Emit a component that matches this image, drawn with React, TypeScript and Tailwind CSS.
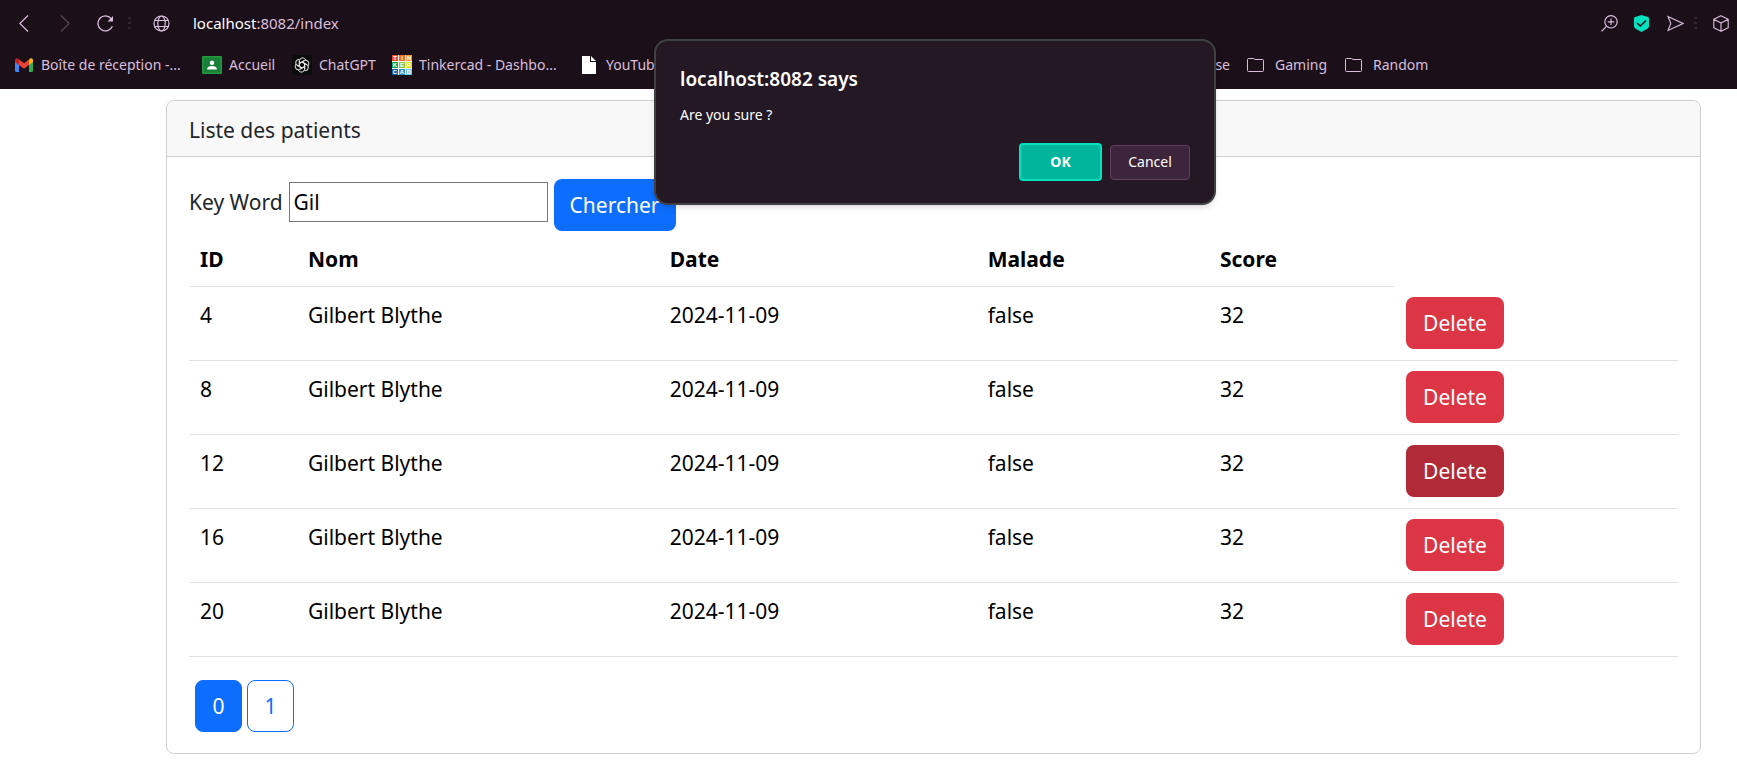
import type { ReactNode } from "react";

const patients = [
  { id: 4, active: false },
  { id: 8, active: false },
  { id: 12, active: true },
  { id: 16, active: false },
  { id: 20, active: false },
].map((p) => ({ ...p, nom: "Gilbert Blythe", date: "2024-11-09", malade: "false", score: 32 }));

const tinkercad = [
  ["T", "#f04e23"], ["I", "#f26a2a"], ["N", "#f7953a"],
  ["K", "#00a651"], ["E", "#8cc63f"], ["R", "#d7df23"],
  ["C", "#0b5fa5"], ["A", "#2f8fd0"], ["D", "#6cc5ea"],
];

function Bookmark({ icon, children }: { icon: ReactNode; children: ReactNode }) {
  return (
    <a href="#" className="flex items-center gap-[7px] whitespace-nowrap">
      {icon}
      <span>{children}</span>
    </a>
  );
}

function Folder() {
  return (
    <svg width="17" height="14" viewBox="0 0 17 14" fill="none" stroke="currentColor" className="mr-1">
      <path d="M.5 1.5a1 1 0 0 1 1-1h5l1.500 1H15.500a1 1 0 0 1 1 1v10a1 1 0 0 1-1 1h-14a1 1 0 0 1-1-1z" />
    </svg>
  );
}

function Dots({ className }: { className: string }) {
  return (
    <svg width="3" height="12" viewBox="0 0 3 12" fill="#322632" className={className}>
      <rect width="3" height="2" />
      <rect y="5" width="3" height="2" />
      <rect y="10" width="3" height="2" />
    </svg>
  );
}

function BrowserBar() {
  return (
    <header className="h-[89px] overflow-hidden bg-[#1b1019] text-[#d9bfdc]">
      <div className="flex h-[46px] items-center pr-2 pl-[19px]">
        <button aria-label="Back">
          <svg width="10" height="17" viewBox="0 0 10 17" fill="none" stroke="currentColor" strokeWidth="1.2">
            <path d="M9 .5.8 8.5 9 16.5" />
          </svg>
        </button>
        <button aria-label="Forward" className="ml-[31px] text-[#58465a]">
          <svg width="10" height="17" viewBox="0 0 10 17" fill="none" stroke="currentColor" strokeWidth="1.2">
            <path d="M1 .5 9.2 8.5 1 16.5" />
          </svg>
        </button>
        <button aria-label="Reload" className="ml-[27px]">
          <svg width="17" height="17" viewBox="0 0 17 17" fill="none" stroke="currentColor" strokeWidth="1.3">
            <path d="M15.400 11.200A7.500 7.500 0 1 1 14.200 3.600" />
            <path d="M16 1v5.500h-5.500z" fill="currentColor" stroke="none" />
          </svg>
        </button>
        <Dots className="ml-3.5" />
        <button aria-label="Site information" className="ml-[22px]">
          <svg width="17" height="17" viewBox="0 0 17 17" fill="none" stroke="currentColor" strokeWidth="1.2">
            <circle cx="8.5" cy="8.5" r="7.5" />
            <ellipse cx="8.5" cy="8.5" rx="3.7" ry="7.5" />
            <path d="M1.800 5.500h13.400M1.800 11.500h13.400" />
          </svg>
        </button>
        <p className="ml-[23px] text-[15px] leading-5">
          <span className="text-white">localhost</span>:8082/index
        </p>
        <div className="ml-auto flex items-center">
          <button aria-label="Zoom">
            <svg width="17" height="17" viewBox="0 0 17 17" fill="none" stroke="currentColor" strokeWidth="1.2">
              <circle cx="10" cy="6.8" r="6.2" />
              <path d="M5.600 11.200.6 16.400M10 3.500v6.600M6.700 6.800h6.600" />
            </svg>
          </button>
          <button aria-label="Protection" className="ml-4">
            <svg width="15" height="17" viewBox="0 0 15 17">
              <path d="M7.500 0 14 2q1 .4 1 1.500v7.500q0 1.500-1.200 2.400L7.500 17 1.200 13.400Q0 12.500 0 11V3.500Q0 2.400 1 2z" fill="#00e1c0" />
              <path d="m3 8 3.300 3L12 5.500" fill="none" stroke="#1b1019" strokeWidth="1.6" />
            </svg>
          </button>
          <button aria-label="Send" className="ml-[18px]">
            <svg width="17" height="17" viewBox="0 0 17 17" fill="none" stroke="currentColor" strokeWidth="1.1">
              <path d="M1 1.500 16 8.500 1 15.500 3.800 8.500z" />
            </svg>
          </button>
          <Dots className="ml-2.5" />
          <button aria-label="Extensions" className="ml-4">
            <svg width="16" height="17" viewBox="0 0 16 17" fill="none" stroke="currentColor" strokeWidth="1.1" strokeLinejoin="round">
              <path d="M8 .8 15.200 4.300V12.700L8 16.200.8 12.700V4.300zM.8 4.300 8 8l7.200-3.700M8 8v8.200" />
            </svg>
          </button>
        </div>
      </div>
      <nav aria-label="Bookmarks" className="flex h-[38px] items-center pl-[15px] text-sm leading-5">
        <div className="flex w-[187px]">
          <Bookmark
            icon={
              <svg width="19" height="14" viewBox="0 0 19 14">
                <path d="M0 2v10.500Q0 14 1.300 14H4V4z" fill="#4285f4" />
                <path d="M14 4v10h2.700Q18 14 18 12.500V2z" fill="#34a853" />
                <path d="M14 1.500V7l4-3V2Q17.600-.5 15 .6z" fill="#fbbc04" />
                <path d="M0 2v2l4 3V1.500L3 .6Q.3-.4 0 2z" fill="#c5221f" />
                <path d="M4 1.500V7l5 3.800L14 7V1.500L9 5.300z" fill="#ea4335" />
              </svg>
            }
          >
            Boîte de réception -...
          </Bookmark>
        </div>
        <div className="flex w-[90px]">
          <Bookmark
            icon={
              <svg width="20" height="18" viewBox="0 0 20 18">
                <rect width="20" height="18" rx="1" fill="#23983f" />
                <rect x="1.5" y="1.5" width="17" height="15" fill="#188038" />
                <circle cx="10" cy="6.8" r="2.2" fill="#fff" />
                <path d="M5 13.500q0-3.500 5-3.500t5 3.500z" fill="#fff" />
              </svg>
            }
          >
            Accueil
          </Bookmark>
        </div>
        <div className="flex w-[100px]">
          <Bookmark
            icon={
              <svg width="20" height="20" viewBox="-10 -10 20 20">
                <rect x="-10" y="-10" width="20" height="20" rx="3" fill="#0c0c0c" />
                <g fill="none" stroke="#e8e8e8" strokeWidth="1">
                  {[0, 60, 120, 180, 240, 300].map((a) => (
                    <path key={a} d="M-2.600 1.500V-4.200A3.200 3.200 0 0 1 3-6L3.800-5.200M-2.600-1.600 2.300-4.400" transform={`rotate(${a})`} />
                  ))}
                </g>
              </svg>
            }
          >
            ChatGPT
          </Bookmark>
        </div>
        <div className="flex w-[190px]">
          <Bookmark
            icon={
              <span aria-hidden="true" className="grid size-5 grid-cols-3 gap-px bg-white text-center font-['Liberation_Sans',sans-serif] text-[6px] leading-[6px] font-bold text-white">
                {tinkercad.map(([letter, color]) => (
                  <span key={letter} style={{ backgroundColor: color }}>{letter}</span>
                ))}
              </span>
            }
          >
            Tinkercad - Dashbo...
          </Bookmark>
        </div>
        <div className="flex w-[632px] justify-between">
          <Bookmark
            icon={
              <svg width="17" height="18" viewBox="0 0 17 18" fill="#fff">
                <path d="M0 0h8v6h6v12H0zM9 0l5 5H9z" />
              </svg>
            }
          >
            YouTube
          </Bookmark>
          <a href="#" className="mr-[-16px]">se</a>
        </div>
        <div className="ml-[33px] flex gap-[18px]">
          <Bookmark icon={<Folder />}>Gaming</Bookmark>
          <Bookmark icon={<Folder />}>Random</Bookmark>
        </div>
      </nav>
    </header>
  );
}

function ConfirmDialog() {
  return (
    <div
      role="alertdialog"
      aria-labelledby="dialog-title"
      aria-describedby="dialog-text"
      className="absolute top-[39px] left-[654px] w-[562px] rounded-[14px] border-2 border-[#414043] bg-[#241824] px-6 pt-6 pb-[22px] text-white shadow-md"
    >
      <h2 id="dialog-title" className="text-[19px] leading-7 font-semibold">localhost:8082 says</h2>
      <p id="dialog-text" className="mt-3 text-sm leading-5">Are you sure ?</p>
      <div className="mt-[18px] flex items-center justify-end gap-2 text-sm">
        <button className="h-[38px] w-[83px] rounded border-2 border-[#00e1c0] bg-[#00b59b] font-bold">OK</button>
        <button className="h-[35px] w-20 rounded border border-[#63405f] bg-[#3d263b]">Cancel</button>
      </div>
    </div>
  );
}

export default function App() {
  return (
    <div className="relative min-h-screen bg-white font-['Noto_Sans',sans-serif]">
      <BrowserBar />
      <main className="pt-[11px] pr-9 pl-[166px] text-[21px] leading-[34px] text-[#212529]">
        <section className="rounded-lg border border-[#cfcfcf]">
          <h1 className="rounded-t-lg border-b border-[#cfcfcf] bg-[#f8f8f8] px-[22px] pt-3 pb-[9px]">Liste des patients</h1>
          <div className="px-[22px] pt-[22px] pb-[21px]">
            <form className="flex items-start gap-1.5" onSubmit={(e) => e.preventDefault()}>
              <label htmlFor="keyword" className="pt-1.5">Key Word</label>
              <input id="keyword" defaultValue="Gil" className="mt-[3px] h-10 w-[259px] border border-[#767676] px-1 text-black" />
              <button className="h-[52px] rounded-lg bg-[#0d6efd] px-4 text-white">Chercher</button>
            </form>
            <table className="w-full table-fixed text-left text-black">
              <colgroup>
                <col className="w-[7.25%]" />
                <col className="w-[24.3%]" />
                <col className="w-[21.35%]" />
                <col className="w-[15.6%]" />
                <col className="w-[12.5%]" />
                <col />
              </colgroup>
              <thead>
                <tr>
                  {["ID", "Nom", "Date", "Malade", "Score"].map((h) => (
                    <th key={h} className="border-b border-[#dee2e6] px-[11px] pt-[11px] pb-2.5 font-bold">{h}</th>
                  ))}
                </tr>
              </thead>
              <tbody>
                {patients.map((p) => (
                  <tr key={p.id} className="align-top">
                    {[p.id, p.nom, p.date, p.malade, p.score].map((v, i) => (
                      <td key={i} className="border-b border-[#dee2e6] px-[11px] pt-[11px]">{v}</td>
                    ))}
                    <td className="border-b border-[#dee2e6] px-[11px] py-2.5 pb-[11px]">
                      <button className={`block h-[52px] rounded-lg px-[17px] text-white ${p.active ? "bg-[#b02a37]" : "bg-[#dc3545]"}`}>Delete</button>
                    </td>
                  </tr>
                ))}
              </tbody>
            </table>
            <nav aria-label="Pages" className="mt-[23px] ml-1.5 flex gap-[5px]">
              <a href="#" className="w-[47px] rounded-lg border border-[#0d6efd] bg-[#0d6efd] py-2 text-center text-white">0</a>
              <a href="#" className="w-[47px] rounded-lg border border-[#0d6efd] py-2 text-center text-[#0d6efd]">1</a>
            </nav>
          </div>
        </section>
      </main>
      <ConfirmDialog />
    </div>
  );
}
